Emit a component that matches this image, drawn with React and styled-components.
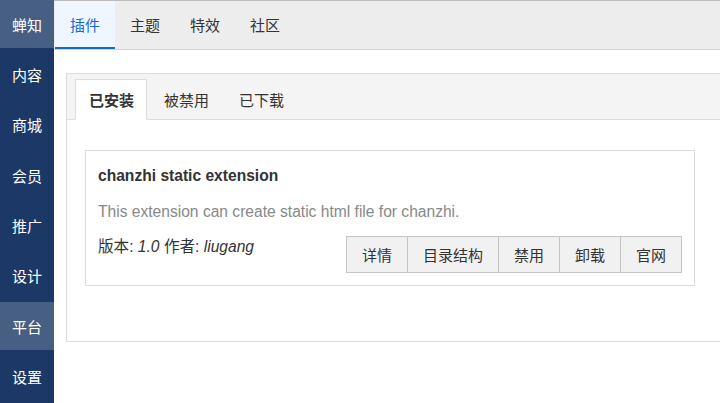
import React from "react";
import styled, { createGlobalStyle } from "styled-components";

const Global = createGlobalStyle`
  html, body { margin: 0; padding: 0; background: #fff; overflow: hidden; }
  body { font-family: "Liberation Sans", "Noto Sans CJK SC", sans-serif; font-size: 15px; color: #333; }
  * { box-sizing: border-box; }
`;

const Shell = styled.div`
  display: flex;
  width: 720px;
  height: 403px;
  overflow: hidden;
`;

const Sidebar = styled.nav`
  width: 54px;
  flex: none;
  background: #1b3867;
  display: flex;
  flex-direction: column;
  gap: 2.4px;
`;

const SideItem = styled.div`
  height: 48px;
  display: flex;
  align-items: center;
  justify-content: center;
  color: #fff;
  font-size: 15px;
  background: ${p => (p.$active ? "#485f84" : "transparent")};
`;

const Main = styled.div`
  flex: 1;
  min-width: 0;
  display: flex;
  flex-direction: column;
`;

const TopBar = styled.div`
  height: 50px;
  background: #ededed;
  border-top: 1px solid #bcbcbc;
  border-bottom: 1px solid #d6d6d6;
  display: flex;
  padding-left: 1px;
`;

const TopTab = styled.div`
  padding: 0 15px;
  display: flex;
  align-items: center;
  font-size: 15px;
  color: ${p => (p.$active ? "#1a68d4" : "#333")};
  background: ${p => (p.$active ? "#eef6ff" : "transparent")};
  border-bottom: 2px solid ${p => (p.$active ? "#1565d8" : "transparent")};
`;

const Content = styled.div`
  padding: 23px 0 0 12px;
`;

const Panel = styled.div`
  border: 1px solid #dcdcdc;
  margin-right: -20px;
  background: #fff;
`;

const PanelHeader = styled.div`
  background: #f4f4f4;
  border-bottom: 1px solid #dcdcdc;
  padding: 5px 0 0 8px;
  display: flex;
  gap: 3px;
  height: 46px;
`;

const PanelTab = styled.div`
  height: 41px;
  margin-bottom: -1px;
  padding: 0 12px 0 13px;
  display: flex;
  align-items: center;
  font-size: 15px;
  font-weight: ${p => (p.$active ? 700 : 400)};
  color: #333;
  background: ${p => (p.$active ? "#fff" : "transparent")};
  border: 1px solid ${p => (p.$active ? "#dcdcdc" : "transparent")};
  border-bottom-color: ${p => (p.$active ? "#fff" : "transparent")};
`;

const PanelBody = styled.div`
  padding: 30px 18px 55px 18px;
`;

const Card = styled.div`
  width: 610px;
  border: 1px solid #dcdcdc;
  padding: 15px 12px 12px 12px;
`;

const Title = styled.div`
  font-size: 15.6px;
  font-weight: 700;
  line-height: 20px;
  color: #333;
`;

const Desc = styled.div`
  margin-top: 16px;
  font-size: 15.6px;
  line-height: 20px;
  color: #888;
`;

const Footer = styled.div`
  margin-top: 14px;
  display: flex;
  justify-content: space-between;
  align-items: flex-start;
`;

const Meta = styled.div`
  padding-top: 1px;
  font-size: 15.6px;
  line-height: 20px;
  color: #333;
  em { font-style: italic; }
`;

const BtnGroup = styled.div`
  display: flex;
`;

const Btn = styled.div`
  height: 37px;
  padding: 0 15px;
  display: flex;
  align-items: center;
  font-size: 15px;
  color: #333;
  background: #f1f1f1;
  border: 1px solid #c4c4c4;
  & + & { margin-left: -1px; }
`;

export default function App() {
  const side = ["内容", "商城", "会员", "推广", "设计", "平台", "设置"];
  return (
    <>
      <Global />
      <Shell>
        <Sidebar>
          <SideItem $active>蝉知</SideItem>
          {side.map(s => (
            <SideItem key={s} $active={s === "平台"}>{s}</SideItem>
          ))}
        </Sidebar>
        <Main>
          <TopBar>
            <TopTab $active>插件</TopTab>
            <TopTab>主题</TopTab>
            <TopTab>特效</TopTab>
            <TopTab>社区</TopTab>
          </TopBar>
          <Content>
            <Panel>
              <PanelHeader>
                <PanelTab $active>已安装</PanelTab>
                <PanelTab>被禁用</PanelTab>
                <PanelTab>已下载</PanelTab>
              </PanelHeader>
              <PanelBody>
                <Card>
                  <Title>chanzhi static extension</Title>
                  <Desc>This extension can create static html file for chanzhi.</Desc>
                  <Footer>
                    <Meta>
                      版本: <em>1.0</em> 作者: <em>liugang</em>
                    </Meta>
                    <BtnGroup>
                      <Btn>详情</Btn>
                      <Btn>目录结构</Btn>
                      <Btn>禁用</Btn>
                      <Btn>卸载</Btn>
                      <Btn>官网</Btn>
                    </BtnGroup>
                  </Footer>
                </Card>
              </PanelBody>
            </Panel>
          </Content>
        </Main>
      </Shell>
    </>
  );
}
